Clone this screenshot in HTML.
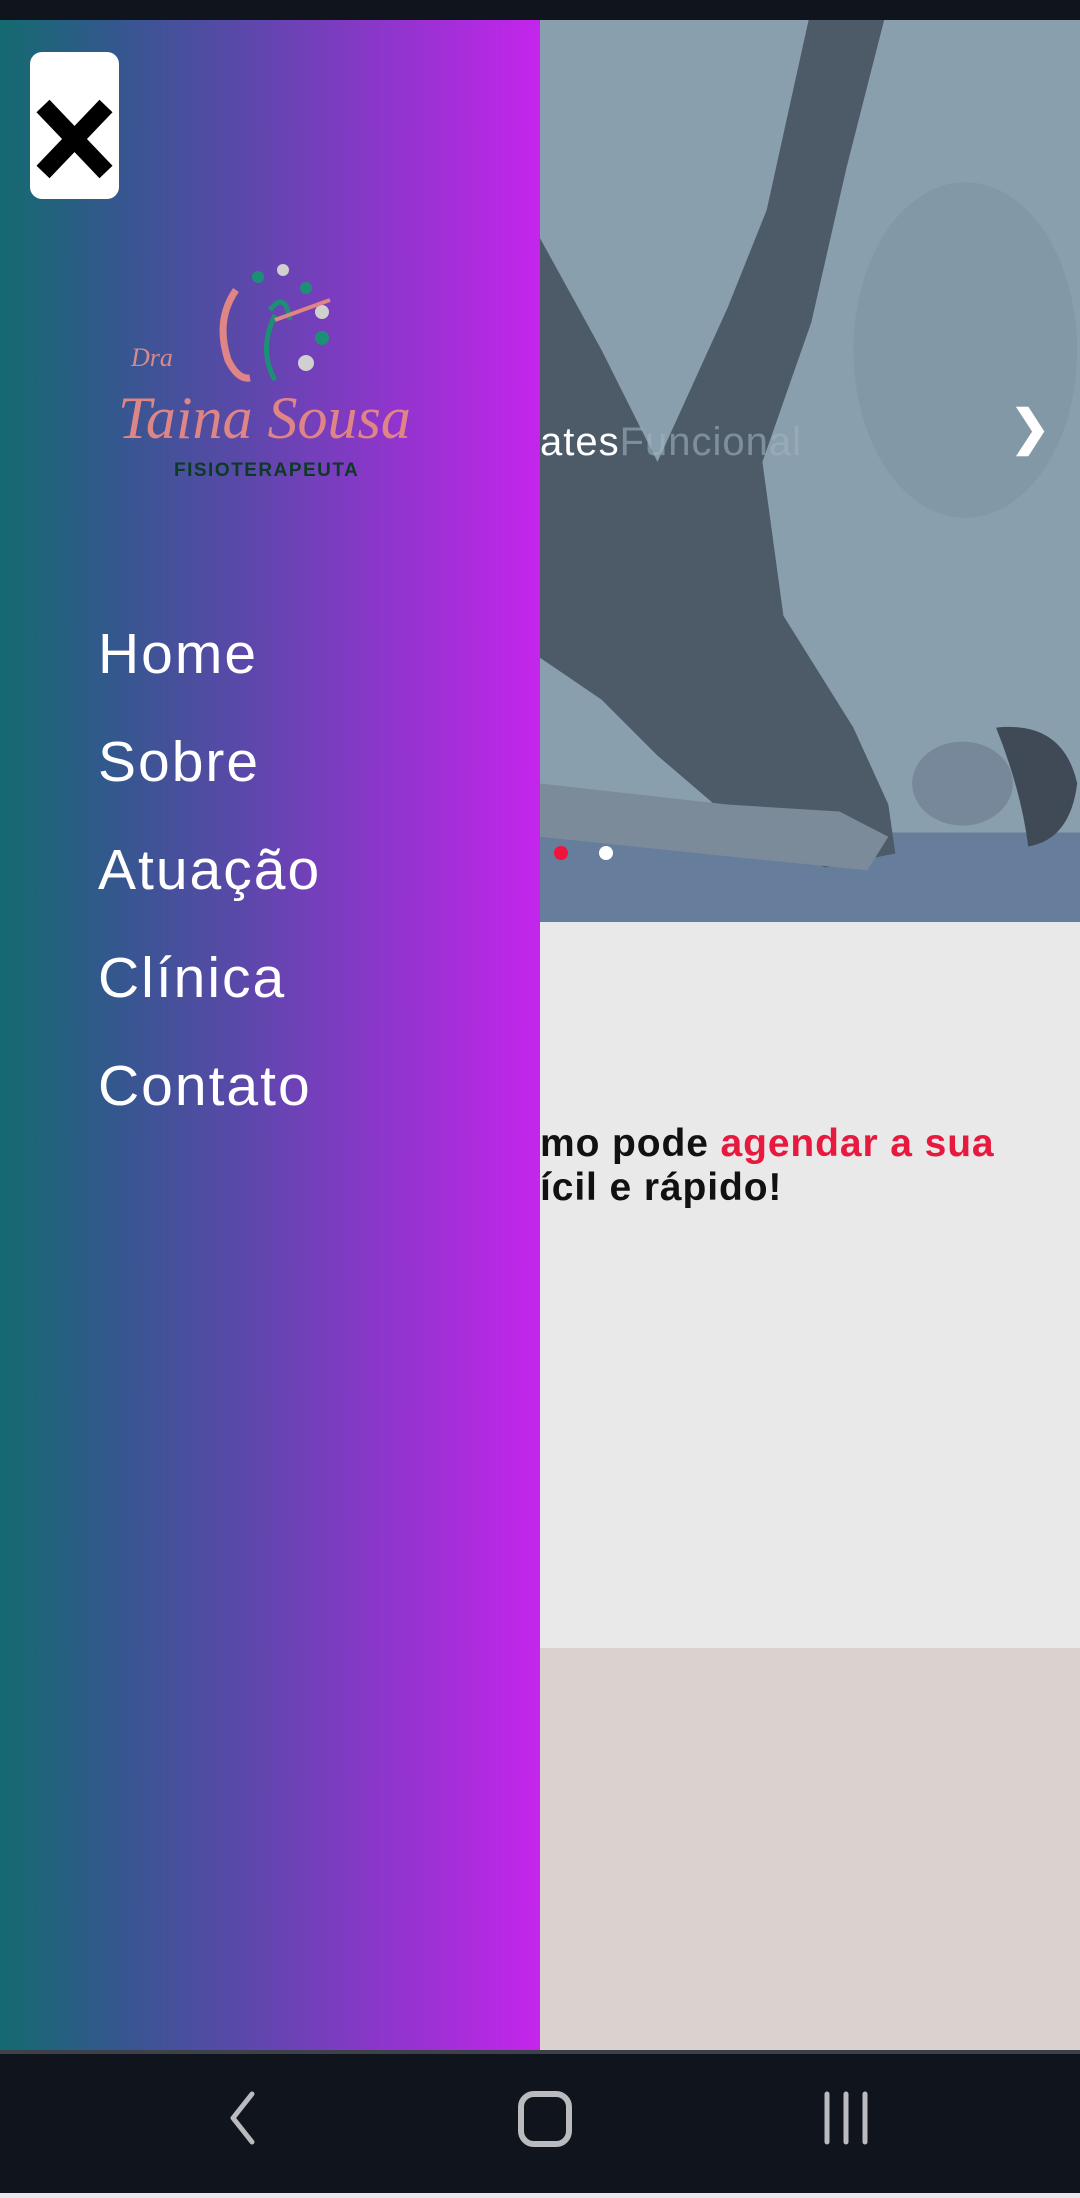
<!DOCTYPE html>
<html><head><meta charset="utf-8"><style>
*{margin:0;padding:0;box-sizing:border-box}
body{width:1080px;height:2193px;position:relative;overflow:hidden;background:#e9e9e9;font-family:"Liberation Sans",sans-serif}
.status{position:absolute;left:0;top:0;width:1080px;height:20px;background:#10141c}
.hero{position:absolute;left:0;top:20px;width:1080px;height:902px;background:#8a9fad;overflow:hidden}
.gray{position:absolute;left:0;top:922px;width:1080px;height:726px;background:#e9e9e9}
.beige{position:absolute;left:0;top:1648px;width:1080px;height:402px;background:#dbd2cf}
.nav{position:absolute;left:0;top:2050px;width:1080px;height:143px;background:#10141c;border-top:4px solid #3c414a}
.drawer{position:absolute;left:0;top:20px;width:540px;height:2030px;background:linear-gradient(90deg,#146a70 0%,#35578f 22%,#5b48aa 45%,#8f35cc 72%,#c425ec 100%)}
.close{position:absolute;left:30px;top:32px;width:89px;height:147px;background:#fff;border-radius:12px}
.menu{position:absolute;left:98px;top:580px;color:#fff;font-size:57px;letter-spacing:2px}
.menu div{height:108px;line-height:108px}
.txt{position:absolute;left:540px;font-weight:bold;font-size:39px;letter-spacing:0.9px;color:#111;white-space:nowrap}
</style></head><body>
<div class="status"></div>
<div class="hero">
<svg width="1080" height="902" viewBox="0 14 772 645" preserveAspectRatio="none" style="position:absolute;left:0;top:0">
<rect x="386" y="14" width="386" height="645" fill="#8a9fad"/>
<ellipse cx="690" cy="250" rx="80" ry="120" fill="#7f95a4" opacity=".6"/>
<rect x="386" y="595" width="386" height="64" fill="#667e9c"/>
<polygon points="386,170 430,250 470,330 520,220 548,150 578,14 632,14 605,120 580,230 545,330 560,440 610,520 635,575 640,610 590,620 540,600 470,540 430,500 386,470" fill="#4d5b69"/>
<polygon points="386,560 520,575 600,580 635,598 620,622 520,612 386,598" fill="#7b8b99"/>
<ellipse cx="688" cy="560" rx="36" ry="30" fill="#77889a"/>
<path d="M712 520 Q760 515 770 560 Q765 600 735 605 Q730 565 712 520Z" fill="#3f4a56"/>
</svg>
<div style="position:absolute;left:540px;top:400px;font-size:40px;color:#fff;letter-spacing:1px">ates<span style="color:#a0b2bf;opacity:.6">Funcional</span></div>
<div style="position:absolute;left:1010px;top:380px;font-size:48px;color:#fff;font-weight:bold">❯</div>
<div style="position:absolute;left:554px;top:826px;width:14px;height:14px;border-radius:50%;background:#f0143c"></div>
<div style="position:absolute;left:599px;top:826px;width:14px;height:14px;border-radius:50%;background:#fff"></div>
</div>
<div class="gray"></div>
<div class="txt" style="top:1122px">mo pode <span style="color:#e8193f">agendar a sua</span></div>
<div class="txt" style="top:1166px">ícil e rápido!</div>
<div class="beige"></div>
<div class="drawer">
<div class="close"><svg width="89" height="147" viewBox="0 0 89 147"><path d="M13 54 L76 120 M76 54 L13 120" stroke="#000" stroke-width="18"/></svg></div>
<svg width="540" height="480" style="position:absolute;left:0;top:0">
<circle cx="283" cy="250" r="6" fill="#d0d0d0"/><circle cx="258" cy="257" r="6" fill="#1d8f77"/><circle cx="306" cy="268" r="6" fill="#1d8f77"/>
<circle cx="322" cy="292" r="7" fill="#d0d0d0"/><circle cx="322" cy="318" r="7" fill="#1d8f77"/><circle cx="306" cy="343" r="8" fill="#d0d0d0"/>
<path d="M236 270 Q215 300 228 340 Q238 360 250 358" stroke="#e08585" stroke-width="7" fill="none"/>
<path d="M270 290 Q285 270 290 300 M275 295 Q258 330 275 360" stroke="#1d8f77" stroke-width="5" fill="none"/>
<path d="M275 300 L330 280" stroke="#e08585" stroke-width="4"/>
<text x="131" y="346" font-family="Liberation Serif,serif" font-style="italic" font-size="26" fill="#d88a8a">Dra</text>
<text x="118" y="418" font-family="Liberation Serif,serif" font-style="italic" font-size="60" fill="#e08585">Taina Sousa</text>
<text x="174" y="456" font-family="Liberation Sans,sans-serif" font-weight="bold" font-size="19" letter-spacing="1.5" fill="#0d3a25">FISIOTERAPEUTA</text>
</svg>
<div class="menu"><div>Home</div><div>Sobre</div><div>Atuação</div><div>Clínica</div><div>Contato</div></div>
</div>
<div class="nav">
<svg width="1080" height="139" viewBox="0 0 1080 139">
<path d="M252 40 L233 64 L252 88" stroke="#b9bbbf" stroke-width="5" fill="none" stroke-linecap="round" stroke-linejoin="round"/>
<rect x="521" y="40" width="48" height="50" rx="13" stroke="#b9bbbf" stroke-width="6" fill="none"/>
<path d="M827 40 V88 M846 40 V88 M865 40 V88" stroke="#b9bbbf" stroke-width="5" stroke-linecap="round"/>
</svg>
</div>
</body></html>
